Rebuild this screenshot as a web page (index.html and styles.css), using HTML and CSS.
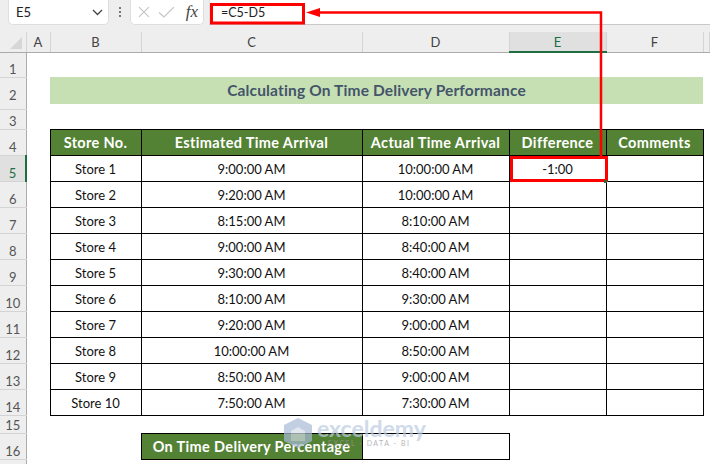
FILE: index.html
```html
<!DOCTYPE html>
<html lang="en">
<head>
    <meta charset="UTF-8">
    <title>On Time Delivery Performance</title>
    <link rel="stylesheet" href="styles.css">
</head>
<body>

<div class="formula-bar">
    <div class="name-box">
        <span>E5</span>
        <svg class="chevron" width="11" height="7" viewBox="0 0 11 7"><path d="M1 1 5.5 5.5 10 1" fill="none" stroke="#444" stroke-width="1.3"/></svg>
    </div>
    <div class="dots"><i></i><i></i><i></i></div>
    <div class="fx-box">
        <svg width="12" height="12" viewBox="0 0 12 12"><path d="M1 1 11 11M11 1 1 11" stroke="#c4c4c4" stroke-width="1.2"/></svg>
        <svg width="17" height="12" viewBox="0 0 17 12"><path d="M1 6.5 6 11 16 1" fill="none" stroke="#c4c4c4" stroke-width="1.2"/></svg>
        <span class="fx">fx</span>
    </div>
    <div class="formula-input">=C5-D5</div>
</div>

<table class="sheet">
    <colgroup>
        <col class="col-row"><col class="col-a"><col class="col-b"><col class="col-c"><col class="col-d"><col class="col-e"><col class="col-f"><col>
    </colgroup>
    <tr class="heads">
        <th class="corner"><svg width="12" height="12" viewBox="0 0 12 12"><path d="M12 0V12H0Z" fill="#d6d6d6"/></svg></th>
        <th>A</th><th>B</th><th>C</th><th>D</th><th class="picked">E</th><th>F</th><th></th>
    </tr>
    <tr class="r1"><th class="rn">1</th><td colspan="7"></td></tr>
    <tr class="r2"><th class="rn">2</th><td></td><td class="title" colspan="5"><div class="title-band">Calculating On Time Delivery Performance</div></td><td></td></tr>
    <tr class="r3"><th class="rn">3</th><td colspan="7"></td></tr>
    <tr class="data">
        <th class="rn">4</th><td></td>
        <td class="hd">Store No.</td><td class="hd">Estimated Time Arrival</td><td class="hd">Actual Time Arrival</td><td class="hd">Difference</td><td class="hd">Comments</td><td></td>
    </tr>
    <tr class="data">
        <th class="rn picked-row">5</th><td></td>
        <td class="c">Store 1</td><td class="c">9:00:00 AM</td><td class="c">10:00:00 AM</td><td class="c">-1:00</td><td class="c"></td><td></td>
    </tr>
    <tr class="data">
        <th class="rn">6</th><td></td>
        <td class="c">Store 2</td><td class="c">9:20:00 AM</td><td class="c">10:00:00 AM</td><td class="c"></td><td class="c"></td><td></td>
    </tr>
    <tr class="data">
        <th class="rn">7</th><td></td>
        <td class="c">Store 3</td><td class="c">8:15:00 AM</td><td class="c">8:10:00 AM</td><td class="c"></td><td class="c"></td><td></td>
    </tr>
    <tr class="data">
        <th class="rn">8</th><td></td>
        <td class="c">Store 4</td><td class="c">9:00:00 AM</td><td class="c">8:40:00 AM</td><td class="c"></td><td class="c"></td><td></td>
    </tr>
    <tr class="data">
        <th class="rn">9</th><td></td>
        <td class="c">Store 5</td><td class="c">9:30:00 AM</td><td class="c">8:40:00 AM</td><td class="c"></td><td class="c"></td><td></td>
    </tr>
    <tr class="data">
        <th class="rn">10</th><td></td>
        <td class="c">Store 6</td><td class="c">8:10:00 AM</td><td class="c">9:30:00 AM</td><td class="c"></td><td class="c"></td><td></td>
    </tr>
    <tr class="data">
        <th class="rn">11</th><td></td>
        <td class="c">Store 7</td><td class="c">9:20:00 AM</td><td class="c">9:00:00 AM</td><td class="c"></td><td class="c"></td><td></td>
    </tr>
    <tr class="data">
        <th class="rn">12</th><td></td>
        <td class="c">Store 8</td><td class="c">10:00:00 AM</td><td class="c">8:50:00 AM</td><td class="c"></td><td class="c"></td><td></td>
    </tr>
    <tr class="data">
        <th class="rn">13</th><td></td>
        <td class="c">Store 9</td><td class="c">8:50:00 AM</td><td class="c">9:00:00 AM</td><td class="c"></td><td class="c"></td><td></td>
    </tr>
    <tr class="data">
        <th class="rn">14</th><td></td>
        <td class="c">Store 10</td><td class="c">7:50:00 AM</td><td class="c">7:30:00 AM</td><td class="c"></td><td class="c"></td><td></td>
    </tr>
    <tr class="r15"><th class="rn">15</th><td colspan="7"></td></tr>
    <tr class="data">
        <th class="rn">16</th><td colspan="2"></td>
        <td class="hd">On Time Delivery Percentage</td><td class="c"></td><td colspan="3"></td>
    </tr>
    <tr class="r17"><th class="rn"></th><td colspan="7"></td></tr>
</table>

<!-- red call-out drawn over the sheet -->
<svg class="callout" width="710" height="464" viewBox="0 0 710 464">
    <g fill="none" stroke="#f00">
        <rect x="211.5" y="4.5" width="92" height="18.5" stroke-width="3"/>
        <rect x="511.5" y="157.5" width="95" height="23" stroke-width="3"/>
        <path d="M601 156V12.5H318" stroke-width="2.5"/>
    </g>
    <path d="M306 12.5 320 8V17Z" fill="#f00"/>
    <rect x="604" y="180" width="3" height="3" fill="#1d6f42"/>
</svg>

<div class="watermark">
    <svg width="28" height="30" viewBox="0 0 28 30"><path d="M14 0 28 7V23L14 30 0 23V7Z" fill="#a9bcd6"/><path d="M14 9 21 13V23H7V13Z" fill="#d3dde9"/></svg>
    <div class="mark-text">
        <div class="mark-name">exceldemy</div>
        <div class="mark-sub">EXCEL - DATA - BI</div>
    </div>
</div>

</body>
</html>
```

FILE: styles.css
```css
html, body {
    margin: 0;
    padding: 0;
    height: 464px;
    overflow: hidden;
    background: #fff;
    font-family: "Lato", "Liberation Sans", sans-serif;
}

.formula-bar {
    display: flex;
    align-items: flex-start;
    height: 32px;
    background: #eeeeee;
}
.name-box {
    display: flex;
    align-items: center;
    justify-content: space-between;
    box-sizing: border-box;
    width: 101px;
    height: 25px;
    margin-left: 8px;
    padding: 0 5px 0 7px;
    background: #fff;
    border: 1px solid #dedede;
    border-top: 0;
    border-radius: 0 0 5px 5px;
    font-size: 13px;
    color: #222;
}
.dots {
    display: flex;
    flex-direction: column;
    gap: 2px;
    width: 21px;
    align-items: center;
    padding-top: 7px;
}
.dots i {
    width: 2px;
    height: 2px;
    background: #777;
}
.fx-box {
    display: flex;
    align-items: center;
    gap: 8px;
    box-sizing: border-box;
    width: 74px;
    height: 25px;
    padding: 0 5px 0 7px;
    background: #fff;
    border: 1px solid #dedede;
    border-top: 0;
    border-radius: 0 0 5px 5px;
}
.fx {
    margin-left: 3px;
    font-family: "Liberation Serif", serif;
    font-style: italic;
    font-size: 17px;
    color: #444;
}
.formula-input {
    flex: 1;
    box-sizing: border-box;
    height: 25px;
    margin-left: 5px;
    padding: 5px 0 0 11px;
    background: #fff;
    border-left: 1px solid #dedede;
    border-bottom: 1px solid #c9c9c9;
    font-size: 12.5px;
    color: #222;
}

.sheet {
    table-layout: fixed;
    width: 710px;
    border-collapse: collapse;
    font-size: 13px;
    color: #111;
}
.sheet td, .sheet th {
    box-sizing: border-box;
    padding: 0;
    text-align: center;
    font-weight: normal;
}
.col-row { width: 26px; }
.col-a { width: 24px; }
.col-b { width: 91px; }
.col-c { width: 221px; }
.col-d { width: 147px; }
.col-e { width: 97px; }
.col-f { width: 97px; }

.heads th {
    height: 20px;
    background: #eeeeee;
    color: #444;
    font-size: 13px;
    border-bottom: 1px solid #ababab;
    border-right: 1px solid #d4d4d4;
}
.sheet .heads .corner {
    text-align: left;
    line-height: 0;
    padding: 3px 0 0 10px;
}
.heads .picked {
    background: #e0e0e0;
    color: #1d6f42;
    border-bottom: 2px solid #1d6f42;
}

.sheet .rn {
    padding-top: 9px;
    line-height: 14px;
    background: #eeeeee;
    color: #555;
    font-size: 13px;
    border-bottom: 1px solid #d4d4d4;
    border-right: 1px solid #ababab;
}
.sheet .rn.picked-row {
    background: #e0e0e0;
    color: #1d6f42;
    border-right: 2px solid #1d6f42;
}

.r1 > * { height: 25px; }
.r2 > * { height: 32px; }
.r3 > * { height: 20px; }
.data > * { height: 26px; }
.r15 > * { height: 18px; }
.r17 > * { height: 5px; }

.sheet .r2 .rn, .sheet .r3 .rn { padding-top: 4px; }
.sheet .r15 .rn { padding-top: 1px; }
.sheet .r17 .rn { padding-top: 0; line-height: 0; }

.sheet .title {
    vertical-align: top;
}
.title-band {
    height: 27px;
    line-height: 27px;
    background: #c6e0b4;
    color: #44546a;
    font-weight: bold;
    font-size: 15.5px;
    letter-spacing: 0.15px;
}
.sheet .hd {
    background: #548235;
    color: #fff;
    font-weight: bold;
    font-size: 14.5px;
    letter-spacing: 0.35px;
    border: 1px solid #000;
}
.sheet .c {
    padding-top: 1px;
    border: 1px solid #000;
}

.callout {
    position: absolute;
    left: 0;
    top: 0;
}

.watermark {
    position: absolute;
    left: 284px;
    top: 418px;
    display: flex;
    gap: 5px;
    opacity: 0.7;
}
.mark-name {
    font-size: 23px;
    font-weight: bold;
    line-height: 21px;
    color: #bccbe2;
}
.mark-sub {
    margin-left: 11px;
    font-size: 7px;
    letter-spacing: 1.5px;
    line-height: 8px;
    color: #999;
}
```
